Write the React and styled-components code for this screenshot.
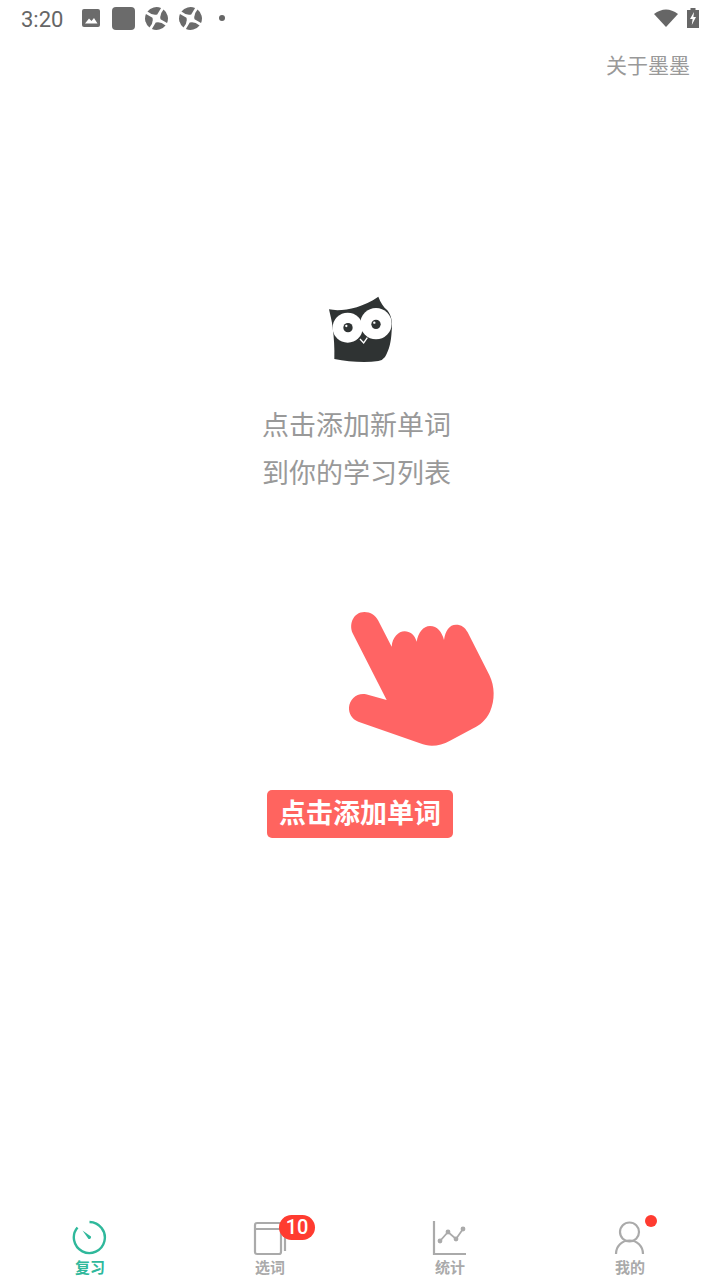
import React from 'react'
import styled, { createGlobalStyle } from 'styled-components'

const cjk = `'Roboto', 'Noto Sans CJK SC', sans-serif`
const green = '#2fb89b'
const grey = '#aaaaaa'

const GlobalStyle = createGlobalStyle`
  html, body {
    margin: 0;
    padding: 0;
    background: #fff;
    font-family: ${cjk};
  }
`
const Page = styled.div`
  width: 720px;
  height: 1280px;
  display: flex;
  flex-direction: column;
  overflow: hidden;
`
const StatusBar = styled.div`
  height: 36px;
  padding: 0 21px;
  display: flex;
  align-items: center;
  color: #666;
`
const Time = styled.span`
  font-size: 22px;
  width: 61px;
  position: relative;
  top: 1px;
`
const StatusIcons = styled.div`
  display: flex;
  align-items: center;
  gap: 11px;
`
const Square = styled.div`
  width: 23px;
  height: 23px;
  margin: 0 -1px 0 1px;
  border-radius: 4px;
  background: #6b6b6b;
`
const StatusDot = styled.div`
  width: 6px;
  height: 6px;
  margin-left: 6px;
  border-radius: 50%;
  background: #666;
`
const Right = styled.div`
  margin-left: auto;
  display: flex;
  align-items: center;
  gap: 9px;
`
const TopBar = styled.div`
  height: 56px;
  padding-right: 30px;
  display: flex;
  justify-content: flex-end;
  align-items: center;
`
const AboutLink = styled.span`
  font-size: 21px;
  font-weight: 400;
  color: #999;
`
const Main = styled.main`
  flex: 1;
  display: flex;
  flex-direction: column;
  align-items: center;
  padding-top: 189px;
`
const Hint = styled.p`
  margin: 21px 7px 0 0;
  font-size: 27px;
  line-height: 48px;
  font-weight: 400;
  color: #999;
  text-align: center;
`
const HandWrap = styled.div`
  margin: 102px 0 0 120px;
  height: 160px;
`
const AddButton = styled.button`
  margin-top: 30px;
  width: 186px;
  height: 48px;
  padding: 0 0 5px;
  border: 0;
  border-radius: 5px;
  background: #ff645f;
  color: #fff;
  font-family: ${cjk};
  font-size: 27px;
  font-weight: 700;
`
const TabBar = styled.nav`
  height: 76px;
  display: grid;
  grid-template-columns: repeat(4, 180px);
`
const Tab = styled.div`
  display: flex;
  flex-direction: column;
  align-items: center;
  padding-top: 16px;
  color: ${p => (p.$active ? green : grey)};
`
const TabIcon = styled.div`
  position: relative;
  width: 36px;
  height: 36px;
`
const TabLabel = styled.span`
  margin-top: 1px;
  font-size: 15px;
  line-height: 22px;
  font-weight: 700;
`
const CountBadge = styled.span`
  position: absolute;
  left: 27px;
  top: -5px;
  width: 36px;
  height: 25px;
  border-radius: 13px;
  background: #ff3b30;
  color: #fff;
  font-size: 20px;
  font-weight: 500;
  line-height: 25px;
  text-align: center;
`
const Dot = styled.span`
  position: absolute;
  right: -9px;
  top: -5px;
  width: 12px;
  height: 12px;
  border-radius: 50%;
  background: #ff3b30;
`

const PictureIcon = () => (
  <svg width="18" height="18" viewBox="0 0 18 18">
    <rect width="18" height="18" rx="2" fill="#6b6b6b" />
    <path d="M3 14.5 L7 9.5 L9.5 12 L12 9 L15.5 14.5 Z" fill="#fff" />
  </svg>
)

const blade = 'M3.500 3.300 A11.500 11.500 0 0 1 17.500 1.700 L12.800 7.600 Q8 8.300 3.500 3.300 Z'

const ApertureIcon = () => (
  <svg width="23" height="23" viewBox="0 0 23 23">
    {[0, 90, 180, 270].map(a => (
      <path key={a} d={blade} fill="#6b6b6b" transform={`rotate(${a - 8} 11.5 11.5)`} />
    ))}
  </svg>
)

const WifiIcon = () => (
  <svg width="24" height="18" viewBox="0 0 24 18">
    <path d="M0 5 Q12 -4 24 5 L12 18 Z" fill="#666" />
  </svg>
)

const BatteryIcon = () => (
  <svg width="12" height="20" viewBox="0 0 12 20">
    <path d="M3.5 0 H8.5 V2 H12 V20 H0 V2 H3.5 Z" fill="#666" />
    <path d="M7 4 L3 11 H5.6 L4.8 17 L9 9 H6.4 Z" fill="#fff" />
  </svg>
)

const OwlLogo = () => (
  <svg width="100" height="100" viewBox="0 0 300 300" style={{ display: 'block' }}>
    <path
      d="M57 85 C90 92 150 85 205 47 C212 65 220 78 232 88 C246 105 248 130 245 150 C243 185 238 205 225 228 Q218 238 205 240 C165 246 115 242 73 234 C74 200 72 170 68 140 C66 120 60 100 57 85 Z"
      fill="#2f3333"
    />
    <circle cx="113" cy="140" r="45" fill="#fff" />
    <circle cx="198" cy="128" r="47" fill="#fff" />
    <path d="M150 174 L161 186 L172 170" fill="none" stroke="#fff" strokeWidth="4" />
    <circle cx="114" cy="140" r="14" fill="#2f3333" />
    <circle cx="198" cy="130" r="14" fill="#2f3333" />
    <circle cx="109" cy="135" r="3.5" fill="#fff" />
    <circle cx="193" cy="125" r="3.5" fill="#fff" />
  </svg>
)

const HandIcon = () => (
  <svg width="180" height="160" viewBox="0 0 540 480" style={{ display: 'block' }}>
    <path
      d="M68 100 C55 70 72 36 103 36 C122 36 136 46 145 62 L185 140 C187 112 205 94 224 94 C240 94 254 104 260 125 C264 98 280 78 300 78 C322 78 336 96 342 120 C346 92 358 74 378 74 C394 74 405 82 413 97 L478 225 C495 260 495 300 480 335 C468 360 450 375 430 385 L360 422 C330 438 300 442 270 430 L85 365 C65 358 56 340 57 322 C59 298 80 278 108 283 L170 300 Z"
      fill="#ff6464"
    />
  </svg>
)

const GaugeIcon = () => (
  <svg width="36" height="36" viewBox="0 0 36 36">
    <path d="M17.500 2 A15.500 15.500 0 1 1 5.500 7.500" fill="none" stroke={green} strokeWidth="2.4" />
    <path d="M10.500 10.500 L19 16.500 A2 2 0 0 1 16.500 19 Z" fill={green} />
  </svg>
)

const BookIcon = () => (
  <svg width="36" height="36" viewBox="0 0 36 36">
    <rect x="3" y="3" width="26" height="31" rx="2" fill="none" stroke={grey} strokeWidth="2.2" />
    <path d="M3 9 H29 M33 15 V31" fill="none" stroke={grey} strokeWidth="2.2" />
  </svg>
)

const ChartIcon = () => (
  <svg width="36" height="36" viewBox="0 0 36 36">
    <path d="M2 1 V34 H34" fill="none" stroke={grey} strokeWidth="2.2" />
    <path d="M8 21 L16 12 L24 19 L31 9" fill="none" stroke={grey} strokeWidth="1.8" />
    <circle cx="8" cy="21" r="2.4" fill={grey} />
    <circle cx="16" cy="12" r="2.4" fill={grey} />
    <circle cx="24" cy="19" r="2.4" fill={grey} />
    <circle cx="31" cy="9" r="2.4" fill={grey} />
  </svg>
)

const PersonIcon = () => (
  <svg width="36" height="36" viewBox="0 0 36 36">
    <circle cx="17.500" cy="12" r="9.500" fill="none" stroke={grey} strokeWidth="2.2" />
    <path d="M4 34 C4 26 10 20.500 17.500 20.500 C25 20.500 31 26 31 34" fill="none" stroke={grey} strokeWidth="2.2" />
  </svg>
)

const App = () => (
  <Page>
    <GlobalStyle />
    <StatusBar>
      <Time>3:20</Time>
      <StatusIcons>
        <PictureIcon />
        <Square />
        <ApertureIcon />
        <ApertureIcon />
        <StatusDot />
      </StatusIcons>
      <Right>
        <WifiIcon />
        <BatteryIcon />
      </Right>
    </StatusBar>
    <TopBar>
      <AboutLink>关于墨墨</AboutLink>
    </TopBar>
    <Main>
      <OwlLogo />
      <Hint>
        点击添加新单词
        <br />
        到你的学习列表
      </Hint>
      <HandWrap>
        <HandIcon />
      </HandWrap>
      <AddButton>点击添加单词</AddButton>
    </Main>
    <TabBar>
      <Tab $active>
        <TabIcon><GaugeIcon /></TabIcon>
        <TabLabel>复习</TabLabel>
      </Tab>
      <Tab>
        <TabIcon>
          <BookIcon />
          <CountBadge>10</CountBadge>
        </TabIcon>
        <TabLabel>选词</TabLabel>
      </Tab>
      <Tab>
        <TabIcon><ChartIcon /></TabIcon>
        <TabLabel>统计</TabLabel>
      </Tab>
      <Tab>
        <TabIcon>
          <PersonIcon />
          <Dot />
        </TabIcon>
        <TabLabel>我的</TabLabel>
      </Tab>
    </TabBar>
  </Page>
)

export default App
